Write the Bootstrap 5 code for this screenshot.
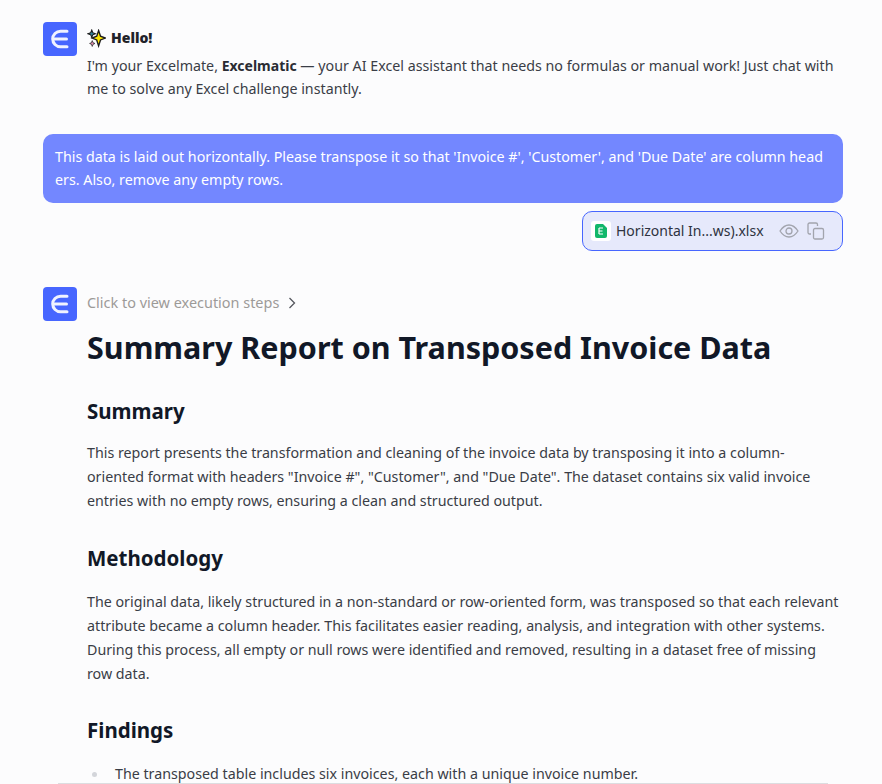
<!DOCTYPE html>
<html lang="en">
<head>
    <meta charset="UTF-8">
    <meta name="viewport" content="width=device-width, initial-scale=1.0">
    <title>Excelmatic</title>
    <link href="https://cdn.jsdelivr.net/npm/bootstrap@5.3.0/dist/css/bootstrap.min.css" rel="stylesheet">
    <style>
        html, body { height: 100%; }
        body { background: #fcfcfd; font-family: "Noto Sans", "Open Sans", sans-serif; font-size: 14.25px; line-height: 24px; color: #3a3d46; overflow: hidden; }
        .chat-wrap { height: 783px; overflow: hidden; padding: 22px 39px 0 43px; }
        .bot-logo { width: 34px; height: 34px; flex: none; background: #4766ff; border-radius: 4px; margin-right: 10px; }
        .hello-line { font-weight: 700; height: 32px; color: #1f2229; }
        .hello-line b { font-size: 14px; margin-left: 1px; }
        .intro-text { margin: 0; line-height: 23px; }
        .intro-text b { font-size: 14px; color: #2a2c33; }
        .user-bubble { background: #7387ff; color: #fff; border-radius: 10px; padding: 11px 16px 12px 12px; margin-top: 34px; line-height: 23px; word-break: break-all; }
        .file-chip { width: 261px; height: 40px; margin-top: 8px; background: #e6e9fb; border: 1px solid #4766ff; border-radius: 10px; padding: 0 17px 0 8px; color: #2e3340; font-size: 14px; }
        .file-icon { width: 20px; height: 20px; background: #fff; border-radius: 3px; margin-right: 5px; }
        .report-row { margin-top: 36px; }
        .steps-line { height: 32px; color: #9c9a98; font-size: 14.45px; }
        .report-title { font-size: 30.5px; line-height: 44px; font-weight: 700; color: #111827; margin: 6px 0 0; }
        .report-head { font-size: 20.5px; line-height: 30px; font-weight: 700; color: #111827; margin: 0; }
        .report-text { margin: 15px 0 0; padding-right: 2.5px; }
        .method-text { margin-top: 17px; }
        .report-block { margin-top: 30px; }
        .first-block { margin-top: 27px; }
        .last-block { margin-top: 29px; }
        .report-list { margin: 17px 0 0; padding: 0; list-style: none; }
        .report-list li { display: flex; align-items: center; }
        .report-list li::before { content: ""; width: 5px; height: 5px; flex: none; border-radius: 50%; background: #d3d5da; margin: 0 18px 0 5px; }
        .bottom-rule { position: absolute; left: 58px; right: 54px; top: 783px; height: 1px; background: #dcdde0; }
    </style>
</head>
<body>
    <div class="chat-wrap">
        <!-- Greeting -->
        <div class="d-flex">
            <div class="bot-logo d-flex align-items-center justify-content-center">
                <svg width="20" height="20" viewBox="0 0 20 20" fill="none" stroke="#f0f2ff" stroke-width="3" stroke-linecap="round"><path d="M17 2.200H10.500A7.800 7.800 0 0 0 10.500 17.800H17"/><path d="M3.500 10H16.500"/></svg>
            </div>
            <div class="flex-grow-1">
                <div class="hello-line d-flex align-items-center">
                    <svg class="me-1" width="19" height="19" viewBox="0 0 18 18"><path d="M11 1.500L12.800 6.800L17.500 8.600L12.800 10.400L11 16L9.200 10.400L4.800 8.600L9.200 6.800Z" fill="#ffe600" stroke="#1c1c1c" stroke-width="1.300"/><path d="M4.500 1L5.500 3.500L8 4.500L5.500 5.500L4.500 8L3.500 5.500L1 4.500L3.500 3.500Z" fill="#2f7f93" stroke="#1c1c1c" stroke-width="1"/><path d="M5 11L5.700 13L7.500 13.700L5.700 14.500L5 16.500L4.200 14.500L2.500 13.700L4.200 13Z" fill="#e58bb0" stroke="#333" stroke-width=".8"/></svg>
                    <b>Hello!</b>
                </div>
                <p class="intro-text">I'm your Excelmate, <b>Excelmatic</b> — your AI Excel assistant that needs no formulas or manual work! Just chat with me to solve any Excel challenge instantly.</p>
            </div>
        </div>

        <!-- User message -->
        <div class="user-bubble">This data is laid out horizontally. Please transpose it so that 'Invoice #', 'Customer', and 'Due Date' are column headers. Also, remove any empty rows.</div>
        <div class="d-flex justify-content-end">
            <div class="file-chip d-flex align-items-center">
                <div class="file-icon d-flex align-items-center justify-content-center">
                    <svg width="12" height="14" viewBox="0 0 12 14"><path d="M2 0H8L12 4V12A2 2 0 0 1 10 14H2A2 2 0 0 1 0 12V2A2 2 0 0 1 2 0Z" fill="#12b76a"/><path d="M4 4H8M4 7H7.500M4 10H8M4 4V10" stroke="#fff" stroke-width="1.200" fill="none"/></svg>
                </div>
                <span class="flex-grow-1">Horizontal In...ws).xlsx</span>
                <svg class="me-2" width="20" height="14" viewBox="0 0 20 14" fill="none" stroke="#a2a4ad" stroke-width="1.300"><path d="M1 7C4 2.500 7 1 10 1S16 2.500 19 7C16 11.500 13 13 10 13S4 11.500 1 7Z"/><circle cx="10" cy="7" r="3"/></svg>
                <svg width="18" height="18" viewBox="0 0 18 18" fill="none" stroke="#a2a4ad" stroke-width="1.300"><rect x="6.500" y="6.500" width="10" height="10.500" rx="1.500"/><path d="M4 12H2.500A1.500 1.500 0 0 1 1 10.500V2.500A1.500 1.500 0 0 1 2.500 1H9A1.500 1.500 0 0 1 10.500 2.500V4"/></svg>
            </div>
        </div>

        <!-- Report -->
        <div class="d-flex report-row">
            <div class="bot-logo d-flex align-items-center justify-content-center">
                <svg width="20" height="20" viewBox="0 0 20 20" fill="none" stroke="#f0f2ff" stroke-width="3" stroke-linecap="round"><path d="M17 2.200H10.500A7.800 7.800 0 0 0 10.500 17.800H17"/><path d="M3.500 10H16.500"/></svg>
            </div>
            <div class="flex-grow-1">
                <div class="steps-line d-flex align-items-center">
                    <span>Click to view execution steps</span>
                    <svg class="ms-2" width="10" height="12" viewBox="0 0 10 12" fill="none" stroke="#55575e" stroke-width="1.300"><path d="M2.500 1L7.500 6L2.500 11"/></svg>
                </div>
                <h1 class="report-title">Summary Report on Transposed Invoice Data</h1>
                <div class="report-block first-block">
                    <h2 class="report-head">Summary</h2>
                    <p class="report-text">This report presents the transformation and cleaning of the invoice data by transposing it into a column-oriented format with headers "Invoice #", "Customer", and "Due Date". The dataset contains six valid invoice entries with no empty rows, ensuring a clean and structured output.</p>
                </div>
                <div class="report-block">
                    <h2 class="report-head">Methodology</h2>
                    <p class="report-text method-text">The original data, likely structured in a non-standard or row-oriented form, was transposed so that each relevant attribute became a column header. This facilitates easier reading, analysis, and integration with other systems. During this process, all empty or null rows were identified and removed, resulting in a dataset free of missing row data.</p>
                </div>
                <div class="report-block last-block">
                    <h2 class="report-head">Findings</h2>
                    <ul class="report-list">
                        <li>The transposed table includes six invoices, each with a unique invoice number.</li>
                    </ul>
                </div>
            </div>
        </div>
    </div>
    <div class="bottom-rule"></div>
</body>
</html>
